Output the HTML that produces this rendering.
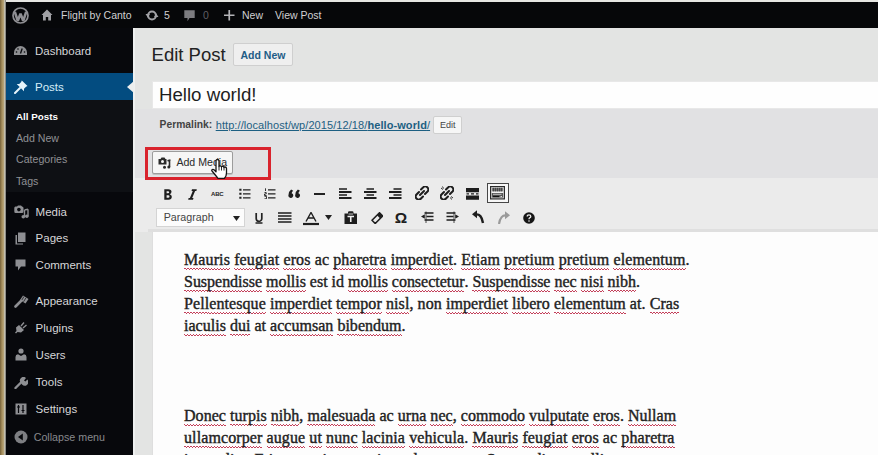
<!DOCTYPE html>
<html><head><meta charset="utf-8">
<style>
*{margin:0;padding:0;box-sizing:border-box}
html,body{width:878px;height:455px;overflow:hidden;background:#e3e4e3;font-family:"Liberation Sans",sans-serif}
.a{position:absolute;white-space:nowrap;line-height:1}
#lstrip{left:0;top:0;width:6px;height:455px;background:linear-gradient(90deg,#76623a 0,#a8915f 35%,#b5a378 60%,#c6c4b8 78%,#6a6a68 100%)}
#tstrip{left:6px;top:0;width:872px;height:2px;background:#e6e6e2}
#bar{left:6px;top:2px;width:873px;height:26px;background:#060709}
#side{left:6px;top:28px;width:127px;height:427px;background:#07080c}
#posts{left:6px;top:73px;width:127px;height:27px;background:#034c80}
#sub{left:6px;top:100px;width:127px;height:92px;background:#0e1014}
.bt{color:#d0d0d2;font-size:10.5px}
.mi{color:#d6d6d8;font-size:11.5px}
.si{color:#909195;font-size:10.6px}
.ic{fill:#8e8f93}
.tb{fill:#222}
.l{position:absolute;white-space:nowrap;line-height:1;font-family:"Liberation Serif",serif;font-size:16px;color:#222;left:184px;-webkit-text-stroke:0.4px #222}
.s{display:inline-block;background-image:repeating-linear-gradient(90deg,#c4405a 0 1.5px,transparent 1.5px 3px),repeating-linear-gradient(90deg,transparent 0 1.5px,#c4405a 1.5px 3px);background-size:100% 1px,100% 1px;background-position:0 18.5px,0 19.5px;background-repeat:no-repeat}
</style></head><body>
<div class="a" id="lstrip"></div>
<div class="a" id="tstrip"></div>
<div class="a" id="bar"></div>
<div class="a" id="side"></div>
<div class="a" id="sub"></div>
<div class="a" id="posts"></div>
<div class="a" style="left:133px;top:28px;width:2px;height:427px;background:#eef0f0"></div>
<div class="a" style="left:127px;top:81px;width:0;height:0;border-top:6px solid transparent;border-bottom:6px solid transparent;border-right:7px solid #eceeee"></div>

<!-- admin bar -->
<svg class="a" style="left:11.5px;top:6.5px" width="17" height="17" viewBox="0 0 17 17"><circle cx="8.5" cy="8.5" r="7.5" fill="none" stroke="#8f8f93" stroke-width="1.7"/><path d="M2.8 4.8 L5.8 13.8 L8.5 6.8 L11.2 13.8 L14.2 4.8" fill="none" stroke="#8f8f93" stroke-width="2.6" stroke-linejoin="bevel"/></svg>
<svg class="a" style="left:41px;top:9px" width="12" height="12" viewBox="0 0 12 12"><path d="M6 0.5 L0.5 6 H2 V11.5 H4.8 V8 H7.2 V11.5 H10 V6 H11.5 Z" fill="#a0a0a4"/></svg>
<div class="a bt" style="left:61px;top:9.6px">Flight by Canto</div>
<svg class="a" style="left:144.5px;top:10px" width="14" height="11" viewBox="0 0 14 11"><circle cx="7" cy="5.5" r="3.9" fill="none" stroke="#a2a2a6" stroke-width="2"/><path d="M0.5 4 H5 L2.8 7.5Z M13.5 7 H9 L11.2 3.5Z" fill="#a2a2a6"/></svg>
<div class="a bt" style="left:164px;top:9.6px">5</div>
<svg class="a" style="left:184px;top:10px" width="11" height="11.5" viewBox="0 0 11 11.5"><path d="M0.3 0.3 H10.7 V8 H5.5 L3.5 11.3 V8 H0.3 Z" fill="#7c7c80"/></svg>
<div class="a bt" style="left:203px;top:9.6px;color:#5e5e62">0</div>
<svg class="a" style="left:224px;top:10px" width="10.5" height="10.5" viewBox="0 0 10.5 10.5"><path d="M5.25 0 V10.5 M0 5.25 H10.5" stroke="#b4b4b8" stroke-width="1.7"/></svg>
<div class="a bt" style="left:242px;top:9.6px">New</div>
<div class="a bt" style="left:275px;top:9.6px">View Post</div>

<!-- sidebar -->
<svg class="a" style="left:14px;top:46px" width="13" height="9" viewBox="0 0 13 9"><path d="M6.5 0 A6.5 6.5 0 0 0 0 6.5 V9 H13 V6.5 A6.5 6.5 0 0 0 6.5 0Z" class="ic"/><path d="M6.5 7.5 L8.2 2.5" stroke="#07080c" stroke-width="1.3"/><circle cx="2.5" cy="6" r="0.8" fill="#07080c"/><circle cx="10.5" cy="6" r="0.8" fill="#07080c"/><circle cx="4" cy="3" r="0.8" fill="#07080c"/></svg>
<div class="a mi" style="left:35px;top:45.9px">Dashboard</div>
<svg class="a" style="left:13.5px;top:79.5px" width="14" height="14" viewBox="0 0 14 14"><path d="M7.8 0.5 L13.5 6 L12 6.8 L10 8.8 L10 11.3 L2.7 4 L5.2 4 L7.2 2Z" fill="#e6f4fb"/><path d="M6 8 L1 13" stroke="#e6f4fb" stroke-width="2" stroke-linecap="round"/></svg>
<div class="a mi" style="left:35px;top:81.7px;color:#d6eef9">Posts</div>
<div class="a si" style="left:16px;top:112.0px;color:#fff;font-weight:bold;font-size:9.8px">All Posts</div>
<div class="a si" style="left:16px;top:132.8px">Add New</div>
<div class="a si" style="left:16px;top:154.1px">Categories</div>
<div class="a si" style="left:16px;top:175.7px">Tags</div>

<svg class="a" style="left:13.5px;top:204.5px" width="15" height="14" viewBox="0 0 15 14"><path d="M1.5 1.5 H3 L4 0.5 H7 L8 1.5 Q9.5 1.5 9.5 3 V6.5 Q9.5 8 8 8 H1.5 Q0.3 8 0.3 6.5 V3 Q0.3 1.5 1.5 1.5Z" class="ic"/><circle cx="4.9" cy="4.6" r="1.8" fill="#07080c"/><path d="M10.5 5 V11.5 M14 4.3 V11 M10.5 5 L14 4.3" stroke="#8e8f93" stroke-width="1.4" fill="none"/><circle cx="9.3" cy="11.8" r="1.8" class="ic"/><circle cx="12.8" cy="11.3" r="1.8" class="ic"/></svg>
<div class="a mi" style="left:35.6px;top:206.7px">Media</div>
<svg class="a" style="left:15px;top:232px" width="11" height="13" viewBox="0 0 11 13"><path d="M3 0.5 H10.5 V10 H3Z" class="ic"/><path d="M0.5 3 H2 V11.5 H8 V12.5 H0.5Z" class="ic"/></svg>
<div class="a mi" style="left:35.6px;top:233.3px">Pages</div>
<svg class="a" style="left:15px;top:259px" width="11" height="12" viewBox="0 0 11 12"><path d="M0.5 0.5 H10.5 V7.5 H6 L3 11.5 V7.5 H0.5Z" class="ic"/></svg>
<div class="a mi" style="left:35.6px;top:260.4px">Comments</div>

<svg class="a" style="left:13.5px;top:294.5px" width="15" height="13" viewBox="0 0 15 13"><path d="M9 0.5 L14.5 4 L11.5 8.5 L6 5Z" class="ic"/><path d="M10 1.5 L7.5 5.5 M12 2.8 L9.5 6.8" stroke="#07080c" stroke-width="0.7"/><path d="M7 6 L1.5 11.5" stroke="#8e8f93" stroke-width="2.6" stroke-linecap="round"/></svg>
<div class="a mi" style="left:35.6px;top:296.1px">Appearance</div>
<svg class="a" style="left:14px;top:322px" width="13" height="12" viewBox="0 0 13 12"><path d="M10 0.5 L7 4 M12.5 3 L9 6" stroke="#8e8f93" stroke-width="1.4"/><path d="M5 3 L10 8 L7 10.5 L3.5 10 L2 11.5 L1 10.5 L2.5 9 L2 5.5Z" class="ic"/></svg>
<div class="a mi" style="left:35.6px;top:323.1px">Plugins</div>
<svg class="a" style="left:15px;top:348px" width="12" height="13" viewBox="0 0 12 13"><circle cx="6" cy="3" r="2.6" class="ic"/><path d="M0.5 12.5 V9 Q0.5 6.5 3 6.3 L6 8 L9 6.3 Q11.5 6.5 11.5 9 V12.5Z" class="ic"/></svg>
<div class="a mi" style="left:35.6px;top:350.0px">Users</div>
<svg class="a" style="left:14px;top:377px" width="14" height="12" viewBox="0 0 14 12"><path d="M1.5 11 L7.5 5" stroke="#8e8f93" stroke-width="2.4" stroke-linecap="round"/><path d="M7 6 A3.5 3.5 0 0 1 12 1 L10 3.5 L11.5 4.5 L13.3 2.5 A3.5 3.5 0 0 1 8 7.5Z" class="ic"/></svg>
<div class="a mi" style="left:35.6px;top:377.1px">Tools</div>
<svg class="a" style="left:15px;top:403px" width="12" height="12" viewBox="0 0 12 12"><path d="M0.5 0.5 H11.5 V11.5 H0.5Z" class="ic"/><path d="M3.5 2 V10 M2 4 H5 M8 2 V10 M6.5 7.5 H9.5" stroke="#07080c" stroke-width="1.2"/></svg>
<div class="a mi" style="left:35.6px;top:404.1px">Settings</div>
<svg class="a" style="left:14px;top:430px" width="14" height="14" viewBox="0 0 14 14"><circle cx="7" cy="7" r="6.5" fill="#7e7f83"/><path d="M8.8 3.5 V10.5 L4 7Z" fill="#07080c"/></svg>
<div class="a mi" style="left:33.7px;top:432.4px;font-size:10.7px;color:#87888c">Collapse menu</div>

<!-- content -->
<div class="a" style="left:135px;top:109px;width:743px;height:69px;background:#e1e1e3"></div>
<div class="a" style="left:151.6px;top:45.9px;font-size:18.5px;color:#222">Edit Post</div>
<div class="a" style="left:233px;top:43px;width:60px;height:23px;background:#efefef;border:1px solid #cfcfcf;border-radius:2px"></div>
<div class="a" style="left:240.5px;top:49.8px;font-size:10.5px;font-weight:bold;color:#1f5d86">Add New</div>

<div class="a" style="left:152px;top:81px;width:726px;height:28px;background:#fefefe;border:1px solid #e8e8e8;border-right:none"></div>
<div class="a" style="left:158.9px;top:86.4px;font-size:18.7px;color:#1e1e1e">Hello world!</div>

<div class="a" style="left:159.6px;top:120px;font-size:10.3px;font-weight:bold;color:#444">Permalink:</div>
<div class="a" style="left:215.7px;top:120px;font-size:11px;letter-spacing:0.08px;color:#1d5f82;text-decoration:underline;text-underline-offset:1px">http://localhost/wp/2015/12/18/<b>hello-world</b>/</div>
<div class="a" style="left:433px;top:116px;width:29px;height:18px;background:#f6f6f6;border:1px solid #cfcfcf;border-radius:2px"></div>
<div class="a" style="left:440px;top:121px;font-size:9px;color:#444">Edit</div>

<!-- add media -->
<div class="a" style="left:151.5px;top:151px;width:81px;height:22.5px;background:#f6f6f6;border:1px solid #9c9c9c;border-radius:2px;box-shadow:0 1px 0 #c0c0c0"></div>
<svg class="a" style="left:158px;top:156.5px" width="13" height="12" viewBox="0 0 13 12"><path d="M0.5 2 H2.5 L3.5 0.5 H6.5 L7.5 2 H8.5 V7.5 H0.5Z" fill="#2a2a2a"/><circle cx="4.5" cy="4.6" r="1.5" fill="#f6f6f6"/><path d="M11.5 3.5 V10 M9.5 3.8 L12.5 3" stroke="#2a2a2a" stroke-width="1.6" fill="none"/><circle cx="6.5" cy="10.3" r="1.5" fill="#2a2a2a"/><circle cx="10.8" cy="10" r="1.5" fill="#2a2a2a"/></svg>
<div class="a" style="left:176.4px;top:157px;font-size:10.6px;color:#2a2a2a">Add Media</div>
<!-- toolbar -->
<div class="a" style="left:135px;top:178px;width:743px;height:54px;background:#ebebeb;"></div>
<div class="a" style="left:148px;top:228.5px;width:730px;height:3.5px;background:#dfdfdf"></div>
<!-- row 1 -->
<svg class="a" style="left:163.5px;top:188.5px" width="8" height="11" viewBox="0 0 8 11"><path d="M0.3 0.3 H4.3 Q7.5 0.3 7.5 2.8 Q7.5 4.6 5.8 5.2 Q7.8 5.8 7.8 7.8 Q7.8 10.7 4.5 10.7 H0.3Z" fill="#1e1e1e"/><path d="M2.6 2.2 H4 Q5.2 2.2 5.2 3.2 Q5.2 4.3 4 4.3 H2.6Z M2.6 6.2 H4.2 Q5.5 6.2 5.5 7.5 Q5.5 8.8 4.2 8.8 H2.6Z" fill="#ececec"/></svg>
<svg class="a" style="left:188px;top:188.5px" width="9" height="11" viewBox="0 0 9 11"><path d="M4 0.3 H8.8 L8.4 2 H7.1 L4.2 9 H5.5 L5 10.7 H0.2 L0.6 9 H1.9 L4.8 2 H3.5Z" fill="#1e1e1e"/></svg>
<div class="a" style="left:211px;top:191px;font-size:6px;font-weight:bold;color:#222;letter-spacing:-0.2px">ABC</div>
<svg class="a" style="left:238.5px;top:188px" width="12" height="11" viewBox="0 0 12 11"><path d="M0.3 1.8 H2.5 M0.3 5.8 H2.5 M0.3 9.8 H2.5" stroke="#222" stroke-width="2"/><path d="M4 1.8 H11.5 M4 5.8 H11.5 M4 9.8 H11.5" stroke="#222" stroke-width="1.2"/></svg>
<svg class="a" style="left:264px;top:188px" width="12" height="11" viewBox="0 0 12 11"><path d="M1.5 0.3 V3 M0.5 4.5 H2.2 V6 H0.5 V7.5 H2.5 M0.5 8.3 H2.5 V10.8 H0.5" stroke="#222" stroke-width="0.9" fill="none"/><path d="M4 1.8 H11.5 M4 5.8 H11.5 M4 9.8 H11.5" stroke="#222" stroke-width="1.2"/></svg>
<svg class="a" style="left:288.3px;top:188.8px" width="12.5" height="9.5" viewBox="0 0 12 9"><path d="M3 0.5 Q0.5 2.5 0.5 5.5 A2.3 2.3 0 1 0 3.5 4 Q3.5 2.5 5 1.5Z M9.5 0.5 Q7 2.5 7 5.5 A2.3 2.3 0 1 0 10 4 Q10 2.5 11.5 1.5Z" fill="#1e1e1e"/></svg>
<div class="a" style="left:314px;top:193px;width:10.5px;height:1.8px;background:#222"></div>
<svg class="a" style="left:338.5px;top:187px" width="13" height="12" viewBox="0 0 13 12"><path d="M0 2 H8 M0 8 H8" stroke="#1e1e1e" stroke-width="1.6"/><path d="M0 5 H12.5 M0 11 H12.5" stroke="#1e1e1e" stroke-width="2"/></svg>
<svg class="a" style="left:364px;top:187px" width="13" height="12" viewBox="0 0 13 12"><path d="M2.5 2 H10 M2.5 8 H10" stroke="#1e1e1e" stroke-width="1.6"/><path d="M0 5 H12.5 M0 11 H12.5" stroke="#1e1e1e" stroke-width="2"/></svg>
<svg class="a" style="left:389px;top:187px" width="13" height="12" viewBox="0 0 13 12"><path d="M4.5 2 H12.5 M4.5 8 H12.5" stroke="#1e1e1e" stroke-width="1.6"/><path d="M0 5 H12.5 M0 11 H12.5" stroke="#1e1e1e" stroke-width="2"/></svg>
<svg class="a" style="left:414.5px;top:186px" width="14" height="14" viewBox="0 0 14 14"><path d="M6 3.5 L8 1.5 A2.6 2.6 0 0 1 12.5 5.5 L10 8 M8 10.5 L6 12.5 A2.6 2.6 0 0 1 1.5 8.5 L4 6 M5 9 L9 5" stroke="#1e1e1e" stroke-width="2" fill="none" stroke-linecap="round"/></svg>
<svg class="a" style="left:440px;top:186px" width="14" height="14" viewBox="0 0 14 14"><path d="M6 3.5 L8 1.5 A2.6 2.6 0 0 1 12.5 5.5 L10 8 M8 10.5 L6 12.5 A2.6 2.6 0 0 1 1.5 8.5 L4 6 M5 9 L9 5" stroke="#1e1e1e" stroke-width="2" fill="none" stroke-linecap="round"/><path d="M1 2 L3 3.5 M2.5 0.5 L3.5 2.5 M13 12 L11 10.5 M11.5 13.5 L10.5 11.5" stroke="#1e1e1e" stroke-width="0.9"/></svg>
<svg class="a" style="left:466px;top:187.5px" width="13" height="12" viewBox="0 0 13 12"><path d="M0 0 H13 V4.3 H0Z M0 7.5 H13 V11.7 H0Z" fill="#1e1e1e"/><path d="M0.5 5.9 H3 M5 5.9 H8 M10 5.9 H12.5" stroke="#1e1e1e" stroke-width="1.1"/></svg>
<div class="a" style="left:487px;top:183px;width:22px;height:20.2px;border:1.6px solid #474747;background:#f7f7f7"></div>
<svg class="a" style="left:490px;top:186.3px" width="15" height="13.5" viewBox="0 0 15 13.5"><rect x="0.6" y="0.6" width="13.8" height="12.3" fill="#f2f2f2" stroke="#2a2a2a" stroke-width="1.2"/><rect x="1.8" y="1.8" width="11.4" height="3.6" fill="#7a7a7a"/><path d="M3.6 1.8 V5.4 M5.6 1.8 V5.4 M7.6 1.8 V5.4 M9.6 1.8 V5.4 M11.4 1.8 V5.4" stroke="#2a2a2a" stroke-width="0.7"/><rect x="1.8" y="7" width="11.4" height="4.6" fill="#555"/><path d="M3 8.3 H11.5" stroke="#ddd" stroke-width="0.8"/><path d="M3 10.5 H9" stroke="#111" stroke-width="1.2"/><path d="M10.5 10.5 H12" stroke="#ddd" stroke-width="1"/></svg>
<!-- row 2 -->
<div class="a" style="left:155.5px;top:207.7px;width:89.5px;height:19.5px;background:#fcfcfc;border:1px solid #d4d4d4"></div>
<div class="a" style="left:163.7px;top:211.9px;font-size:10.7px;color:#444">Paragraph</div>
<svg class="a" style="left:233px;top:215.5px" width="7" height="5" viewBox="0 0 7 5"><path d="M0 0 H7 L3.5 5Z" fill="#222"/></svg>
<svg class="a" style="left:254.5px;top:212.5px" width="8" height="11" viewBox="0 0 8 11"><path d="M1.2 0 V5.5 A2.8 2.8 0 0 0 6.8 5.5 V0" stroke="#222" stroke-width="1.7" fill="none"/><path d="M0.5 10 H7.5" stroke="#222" stroke-width="1.5"/></svg>
<svg class="a" style="left:277.5px;top:212px" width="14" height="11" viewBox="0 0 14 11"><path d="M0 1 H13.5 M0 4 H13.5 M0 7 H13.5 M0 10 H13.5" stroke="#1e1e1e" stroke-width="1.7"/></svg>
<svg class="a" style="left:302.5px;top:212px" width="16" height="13.5" viewBox="0 0 16 13.5"><path d="M3 9.5 L8 0.5 L13 9.5 M5 6 H11" stroke="#1e1e1e" stroke-width="1.4" fill="none"/><path d="M0 12 H16" stroke="#1e1e1e" stroke-width="2.2"/></svg>
<svg class="a" style="left:325px;top:215.3px" width="7" height="5" viewBox="0 0 7 5"><path d="M0 0 H7 L3.5 5Z" fill="#222"/></svg>
<svg class="a" style="left:344px;top:210.8px" width="13.5" height="13" viewBox="0 0 13.5 13"><path d="M0.5 2.5 H4 V1.5 Q4 0.3 5.3 0.3 H8.2 Q9.5 0.3 9.5 1.5 V2.5 H13 V13 H0.5Z" fill="#1e1e1e"/><path d="M3.5 5.5 H10 M6.75 5.5 V11" stroke="#f0f0f0" stroke-width="1.6"/><path d="M4.5 3 H9" stroke="#f0f0f0" stroke-width="0.8"/></svg>
<svg class="a" style="left:370.5px;top:211.5px" width="12.5" height="12.5" viewBox="0 0 12.5 12.5"><path d="M8.5 0.8 L11.7 4 L4.2 11.5 L1 8.3Z" fill="none" stroke="#1e1e1e" stroke-width="1.6" stroke-linejoin="round"/><path d="M6 3.3 L9.2 6.5 L11.7 4 L8.5 0.8Z" fill="#1e1e1e"/></svg>
<div class="a" style="left:394.8px;top:210.2px;font-size:15.5px;color:#1e1e1e;font-family:'Liberation Sans',sans-serif;font-weight:bold">Ω</div>
<svg class="a" style="left:420.5px;top:210.5px" width="13" height="12.5" viewBox="0 0 13 12.5"><path d="M3.5 2 H12.5 M5.5 5.5 H12.5 M3.5 9 H12.5" stroke="#1e1e1e" stroke-width="1.7"/><path d="M0 5.5 L3.8 3.2 V7.8Z" fill="#1e1e1e"/><path d="M5 0.5 V12" stroke="#1e1e1e" stroke-width="0.8"/></svg>
<svg class="a" style="left:446px;top:210.5px" width="13" height="12.5" viewBox="0 0 13 12.5"><path d="M0.5 2 H9.5 M0.5 5.5 H7.5 M0.5 9 H9.5" stroke="#1e1e1e" stroke-width="1.7"/><path d="M13 5.5 L9.2 3.2 V7.8Z" fill="#1e1e1e"/><path d="M8 0.5 V12" stroke="#1e1e1e" stroke-width="0.8"/></svg>
<svg class="a" style="left:472px;top:210px" width="13" height="13.5" viewBox="0 0 13 13.5"><path d="M3.5 4.5 Q9.5 3.5 11 13" stroke="#1e1e1e" stroke-width="2.4" fill="none"/><path d="M0 4.3 L5 0.3 V8.3Z" fill="#1e1e1e"/></svg>
<svg class="a" style="left:496.5px;top:210.5px" width="13" height="13" viewBox="0 0 13 13"><path d="M9.5 4.5 Q3.5 3.5 2 13" stroke="#9a9a9a" stroke-width="2.2" fill="none"/><path d="M13 4.3 L8 0.3 V8.3Z" fill="#9a9a9a"/></svg>
<svg class="a" style="left:523px;top:211.5px" width="12" height="12" viewBox="0 0 12 12"><circle cx="6" cy="6" r="5.8" fill="#151515"/><path d="M4.2 4.6 Q4.2 2.8 6 2.8 Q7.8 2.8 7.8 4.4 Q7.8 5.4 6.6 5.9 Q6 6.2 6 7.3" stroke="#eee" stroke-width="1.3" fill="none"/><circle cx="6" cy="9" r="0.8" fill="#eee"/></svg>

<div class="a" style="left:145px;top:146.5px;width:126px;height:33px;border:3px solid #d9232d"></div>
<!-- cursor -->
<svg class="a" style="left:211px;top:158.5px" width="17" height="20" viewBox="0 0 17 20"><path d="M5 2 Q5 0.5 6.5 0.5 Q8 0.5 8 2 V7.5 Q8 6.8 9.3 6.8 Q10.5 6.8 10.5 8 Q10.5 7.3 11.8 7.3 Q13 7.3 13 8.5 Q13 8 14 8 Q15.5 8 15.5 9.5 V14 Q15.5 17 13.5 19.3 H7 Q5.5 17.5 3.5 15 L1 12 Q0.3 11 1.3 10.5 Q2.3 10 3.3 11 L5 12.7 Z" fill="#fff" stroke="#151515" stroke-width="1.3" stroke-linejoin="round"/><path d="M8 7.5 V11.5 M10.5 8 V11.5 M13 8.5 V11.5" stroke="#151515" stroke-width="0.9"/></svg>
<!-- editor -->
<div class="a" style="left:152px;top:232px;width:726px;height:223px;background:#fdfdfd;border-left:1px solid #dedede"></div>

<div class="l" style="top:249.3px;line-height:22px;letter-spacing:0.11px"><span class="s">Mauris</span> <span class="s">feugiat</span> <span class="s">eros</span> ac <span class="s">pharetra</span> <span class="s">imperdiet</span>. <span class="s">Etiam</span> <span class="s">pretium</span> <span class="s">pretium</span> <span class="s">elementum</span>.</div>
<div class="l" style="top:271.1px;line-height:22px;letter-spacing:-0.02px"><span class="s">Suspendisse</span> <span class="s">mollis</span> est id <span class="s">mollis</span> <span class="s">consectetur</span>. <span class="s">Suspendisse</span> <span class="s">nec</span> <span class="s">nisi</span> <span class="s">nibh</span>.</div>
<div class="l" style="top:293.2px;line-height:22px;letter-spacing:0.08px"><span class="s">Pellentesque</span> <span class="s">imperdiet</span> <span class="s">tempor</span> <span class="s">nisl</span>, non <span class="s">imperdiet</span> <span class="s">libero</span> <span class="s">elementum</span> at. <span class="s">Cras</span></div>
<div class="l" style="top:315.3px;line-height:22px;letter-spacing:0.02px"><span class="s">iaculis</span> <span class="s">dui</span> at <span class="s">accumsan</span> <span class="s">bibendum</span>.</div>

<div class="l" style="top:405.2px;line-height:22px;letter-spacing:0.04px"><span class="s">Donec</span> <span class="s">turpis</span> <span class="s">nibh</span>, <span class="s">malesuada</span> ac <span class="s">urna</span> <span class="s">nec</span>, <span class="s">commodo</span> <span class="s">vulputate</span> <span class="s">eros</span>. <span class="s">Nullam</span></div>
<div class="l" style="top:427.4px;line-height:22px;letter-spacing:0.1px"><span class="s">ullamcorper</span> <span class="s">augue</span> <span class="s">ut</span> <span class="s">nunc</span> <span class="s">lacinia</span> <span class="s">vehicula</span>. <span class="s">Mauris</span> <span class="s">feugiat</span> <span class="s">eros</span> ac <span class="s">pharetra</span></div>
<div class="l" style="top:449.4px;line-height:22px;letter-spacing:0.1px"><span class="s">imperdiet</span>. <span class="s">Etiam</span> <span class="s">pretium</span> <span class="s">pretium</span> <span class="s">elementum</span>. <span class="s">Suspendisse</span> <span class="s">mollis</span> est</div>
</body></html>
